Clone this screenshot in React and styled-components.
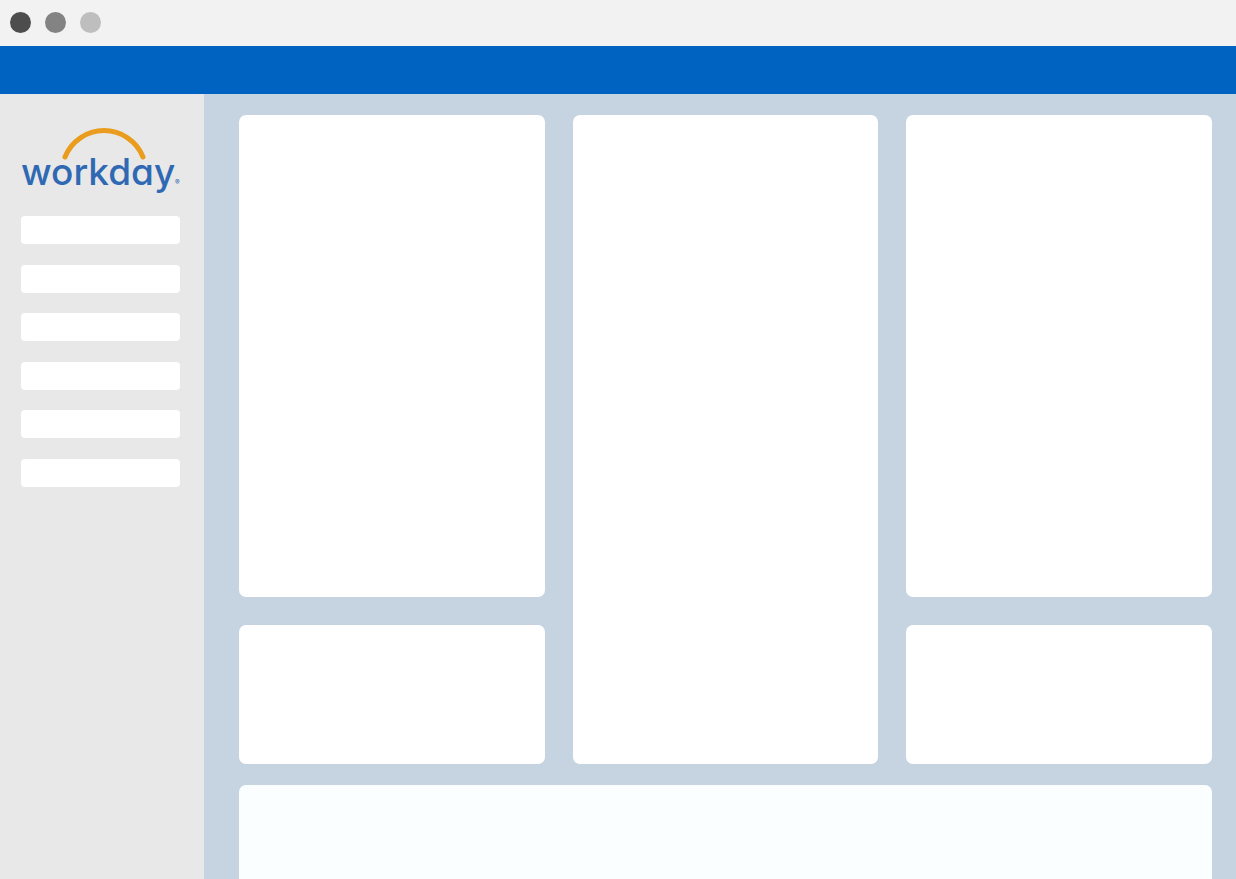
import React from "react";
import styled, { createGlobalStyle } from "styled-components";

const GlobalStyle = createGlobalStyle`
  * { box-sizing: border-box; }
  body { margin: 0; font-family: Inter, "Open Sans", sans-serif; background: #c5d4e0; }
`;

const Page = styled.div`
  display: flex;
  flex-direction: column;
  min-height: 100vh;
`;

const TitleBar = styled.header`
  display: flex;
  align-items: center;
  gap: 14px;
  height: 46px;
  padding: 0 10px 2px;
  background: #f2f2f2;
`;

const WindowDot = styled.span`
  width: 21px;
  height: 21px;
  border-radius: 50%;
  background: ${({ $color }) => $color};
`;

const Banner = styled.div`
  height: 48px;
  background: #0063c2;
`;

const Body = styled.div`
  display: flex;
  flex: 1;
`;

const Sidebar = styled.aside`
  flex: none;
  width: 204px;
  padding: 32px 24px 32px 21px;
  background: #e8e8e8;
`;

const Logo = styled.svg`
  display: block;
  width: 100%;
  height: 69px;
  margin-bottom: 21px;
  overflow: visible;
`;

const Wordmark = styled.text`
  fill: #3069b3;
  font-family: Inter, "Open Sans", sans-serif;
  font-size: ${({ $size }) => $size}px;
  font-weight: 500;
  font-feature-settings: "cv11";
`;

const Menu = styled.nav`
  display: flex;
  flex-direction: column;
  justify-content: space-between;
  height: 271px;
`;

const MenuItem = styled.div`
  height: 28px;
  border-radius: 4px;
  background: #fff;
`;

const Dashboard = styled.main`
  display: grid;
  flex: 1;
  grid-template-columns: repeat(3, 1fr);
  grid-template-rows: 482px 28px 139px minmax(115px, 1fr);
  column-gap: 28px;
  padding: 21px 24px 0 35px;
  background: #c5d4e0;
`;

const Card = styled.section`
  grid-column: ${({ $column }) => $column};
  grid-row: ${({ $row }) => $row};
  border-radius: 7px;
  background: #fff;
`;

const WideCard = styled(Card)`
  margin-top: 21px;
  border-radius: 7px 7px 0 0;
  background: #fbfeff;
`;

const dots = ["#4d4d4d", "#838383", "#bebebe"];
const menuItems = [1, 2, 3, 4, 5, 6];

export default function App() {
  return (
    <>
      <GlobalStyle />
      <Page>
        <TitleBar>
          {dots.map((color) => (
            <WindowDot key={color} $color={color} />
          ))}
        </TitleBar>
        <Banner />
        <Body>
          <Sidebar>
            <Logo viewBox="0 0 159 69" role="img" aria-label="workday">
              <path
                d="M44 31 A42 42 0 0 1 122 31"
                fill="none"
                stroke="#ea9c1e"
                strokeWidth="5"
                strokeLinecap="round"
              />
              <Wordmark x="0" y="59" $size={37}>workday</Wordmark>
              <Wordmark x="154" y="59" $size={7}>®</Wordmark>
            </Logo>
            <Menu>
              {menuItems.map((item) => (
                <MenuItem key={item} />
              ))}
            </Menu>
          </Sidebar>
          <Dashboard>
            <Card $column="1" $row="1" />
            <Card $column="1" $row="3" />
            <Card $column="2" $row="1 / 4" />
            <Card $column="3" $row="1" />
            <Card $column="3" $row="3" />
            <WideCard $column="1 / -1" $row="4" />
          </Dashboard>
        </Body>
      </Page>
    </>
  );
}
